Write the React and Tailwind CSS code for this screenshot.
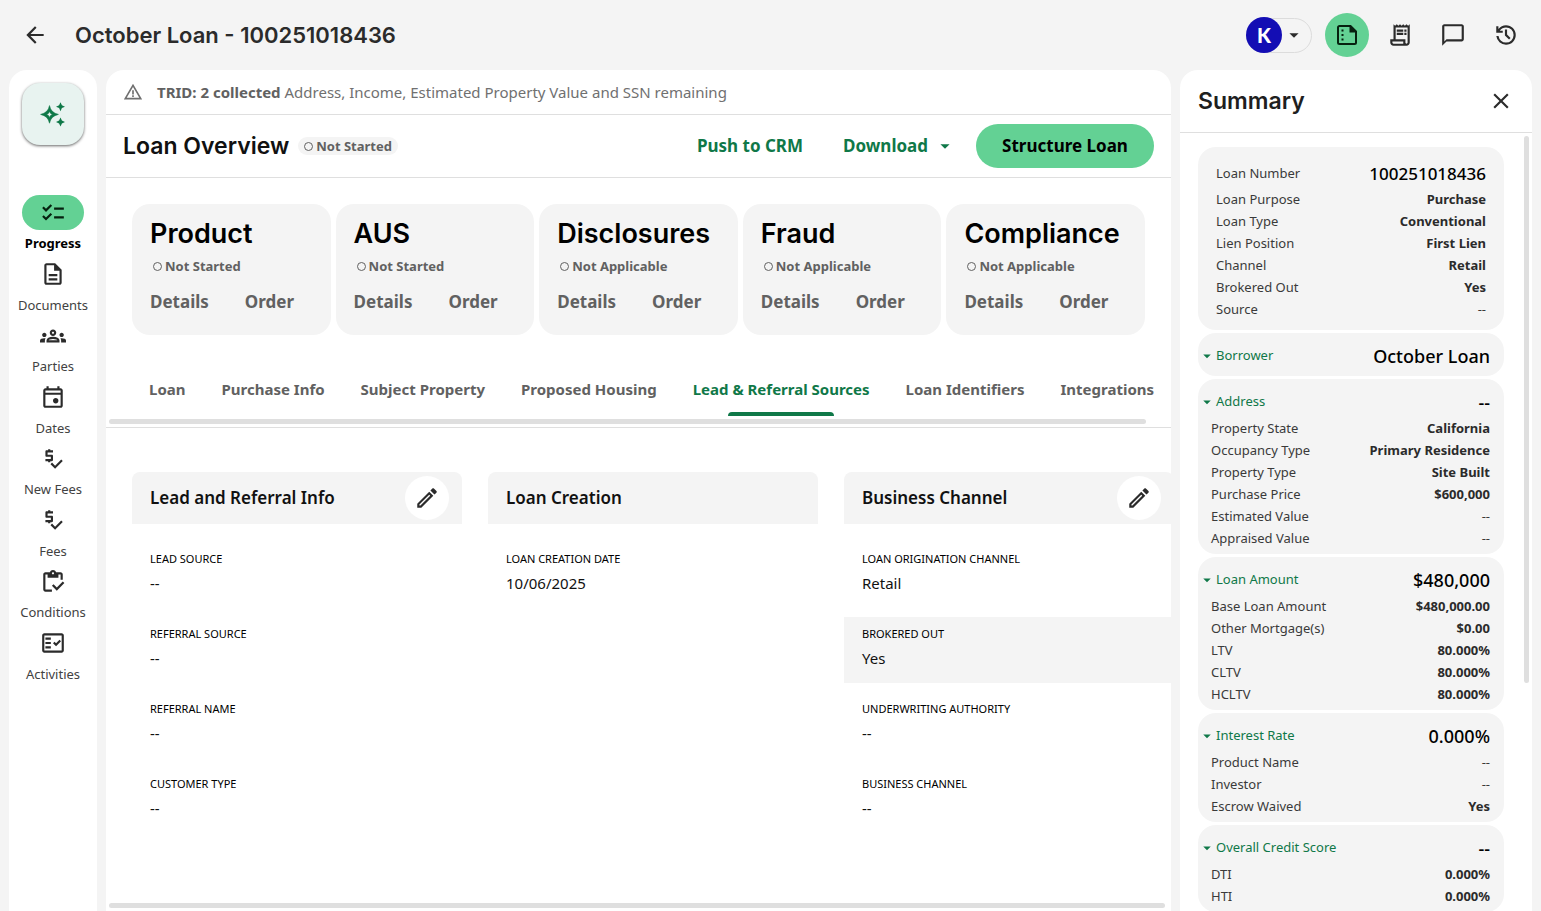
import {
  MdArrowBack,
  MdArrowDropDown,
  MdChecklist,
  MdClose,
  MdOutlineChatBubbleOutline,
  MdOutlineDescription,
  MdOutlineEdit,
  MdOutlineFactCheck,
  MdOutlineGroups,
  MdOutlineInventory,
  MdOutlineReceiptLong,
  MdPriceCheck,
  MdWarningAmber,
} from 'react-icons/md'

const NAV_ITEMS = [
  { label: 'Progress', icon: MdChecklist },
  { label: 'Documents', icon: MdOutlineDescription },
  { label: 'Parties', icon: MdOutlineGroups },
  { label: 'Dates', icon: CalendarIcon },
  { label: 'New Fees', icon: MdPriceCheck },
  { label: 'Fees', icon: MdPriceCheck },
  { label: 'Conditions', icon: MdOutlineInventory },
  { label: 'Activities', icon: MdOutlineFactCheck },
]

const STATUS_CARDS = [
  { title: 'Product', status: 'Not Started' },
  { title: 'AUS', status: 'Not Started' },
  { title: 'Disclosures', status: 'Not Applicable' },
  { title: 'Fraud', status: 'Not Applicable' },
  { title: 'Compliance', status: 'Not Applicable' },
]

const TABS = [
  'Loan',
  'Purchase Info',
  'Subject Property',
  'Proposed Housing',
  'Lead & Referral Sources',
  'Loan Identifiers',
  'Integrations',
]

const SECTIONS = [
  {
    title: 'Lead and Referral Info',
    editable: true,
    fields: [
      ['Lead Source', '--'],
      ['Referral Source', '--'],
      ['Referral Name', '--'],
      ['Customer Type', '--'],
    ],
  },
  {
    title: 'Loan Creation',
    editable: false,
    fields: [['Loan Creation Date', '10/06/2025']],
  },
  {
    title: 'Business Channel',
    editable: true,
    fields: [
      ['Loan Origination Channel', 'Retail'],
      ['Brokered Out', 'Yes', true],
      ['Underwriting Authority', '--'],
      ['Business Channel', '--'],
    ],
  },
]

const LOAN_ROWS = [
  ['Loan Purpose', 'Purchase'],
  ['Loan Type', 'Conventional'],
  ['Lien Position', 'First Lien'],
  ['Channel', 'Retail'],
  ['Brokered Out', 'Yes'],
  ['Source', '--'],
]

const SUMMARY_GROUPS = [
  { title: 'Borrower', value: 'October Loan', rows: [] },
  {
    title: 'Address',
    value: '--',
    rows: [
      ['Property State', 'California'],
      ['Occupancy Type', 'Primary Residence'],
      ['Property Type', 'Site Built'],
      ['Purchase Price', '$600,000'],
      ['Estimated Value', '--'],
      ['Appraised Value', '--'],
    ],
  },
  {
    title: 'Loan Amount',
    value: '$480,000',
    rows: [
      ['Base Loan Amount', '$480,000.00'],
      ['Other Mortgage(s)', '$0.00'],
      ['LTV', '80.000%'],
      ['CLTV', '80.000%'],
      ['HCLTV', '80.000%'],
    ],
  },
  {
    title: 'Interest Rate',
    value: '0.000%',
    rows: [
      ['Product Name', '--'],
      ['Investor', '--'],
      ['Escrow Waived', 'Yes'],
    ],
  },
  {
    title: 'Overall Credit Score',
    value: '--',
    rows: [
      ['DTI', '0.000%'],
      ['HTI', '0.000%'],
    ],
  },
]

function SparkleIcon() {
  return (
    <svg width="26" height="26" viewBox="0 0 26 26" fill="currentColor">
      <path
        fillRule="evenodd"
        d="M9.500 4.600 Q10.800 11.800 18.400 13.400 Q10.800 15 9.500 22.200 Q8.200 15 0.600 13.400 Q8.200 11.800 9.500 4.600 Z M9.500 10.400 Q8.800 12.700 6.600 13.400 Q8.800 14.100 9.500 16.400 Q10.200 14.100 12.400 13.400 Q10.200 12.700 9.500 10.400 Z"
        stroke="currentColor"
        strokeWidth="0.6"
      />
      <path d="M20.500 1.200 L21.900 4.300 L25 5.700 L21.900 7.100 L20.500 10.200 L19.100 7.100 L16 5.700 L19.100 4.300 Z" />
      <path d="M20.500 16.500 L21.900 19.600 L25 21 L21.900 22.400 L20.500 25.500 L19.100 22.400 L16 21 L19.100 19.600 Z" />
    </svg>
  )
}

function SummaryIcon() {
  return (
    <svg width="24" height="24" viewBox="0 0 24 24" fill="currentColor">
      <path
        d="M4.500 3H15.500L21 8.500V19.500a1.500 1.500 0 0 1-1.500 1.500H4.500A1.500 1.500 0 0 1 3 19.500V4.500A1.500 1.500 0 0 1 4.500 3z"
        fill="none"
        stroke="currentColor"
        strokeWidth="2"
      />
      <path d="M14.500 2.500L21.500 9.500H14.500z" />
      <path d="M6.500 6.500h2v2h-2zM6.500 11h2v2h-2zM6.500 15.500h2v2h-2z" />
    </svg>
  )
}

function HistoryIcon() {
  return (
    <svg width="26" height="26" viewBox="0 0 24 24" fill="currentColor">
      <path d="M12 21q-3.450 0-6.012-2.288T3.050 13H5.100q.350 2.600 2.313 4.300T12 19q2.925 0 4.963-2.037T19 12t-2.037-4.962T12 5q-1.725 0-3.225.8T6.250 8H9v2H3V4h2v2.350q1.275-1.600 3.113-2.475T12 3q1.875 0 3.513.713t2.850 1.924t1.925 2.850T21 12t-.712 3.513t-1.925 2.850t-2.850 1.925T12 21m2.800-4.800L11 12.400V7h2v4.600l3.200 3.200z" />
    </svg>
  )
}

function CalendarIcon({ size }) {
  return (
    <svg width={size} height={size} viewBox="0 0 24 24" fill="currentColor">
      <path d="M14.500 18q-1.050 0-1.775-.725T12 15.500t.725-1.775T14.500 13t1.775.725T17 15.500t-.725 1.775T14.500 18M5 22q-.825 0-1.412-.587T3 20V6q0-.825.588-1.412T5 4h1V2h2v2h8V2h2v2h1q.825 0 1.413.588T21 6v14q0 .825-.587 1.413T19 22zm0-2h14V10H5zM5 8h14V6H5z" />
    </svg>
  )
}

function IconButton({ label, active = false, children }) {
  return (
    <button
      aria-label={label}
      className={`flex size-11 items-center justify-center rounded-full ${active ? 'bg-[#63d194] text-[#06210f]' : 'text-[#2b2b2b]'}`}
    >
      {children}
    </button>
  )
}

function Status({ text }) {
  return (
    <span className="flex items-center gap-[3px] text-[13px] leading-4 font-bold text-[#616161]">
      <span className="size-[9px] rounded-full border border-[#616161]" />
      {text}
    </span>
  )
}

function TopBar() {
  return (
    <header className="flex h-[70px] shrink-0 items-center justify-between px-[13px]">
      <div className="flex items-center gap-[18px]">
        <IconButton label="Back">
          <MdArrowBack size={26} />
        </IconButton>
        <h1 className="font-[Inter] text-[22px] font-semibold text-[#2b2b2b]">October Loan - 100251018436</h1>
      </div>
      <div className="flex items-center gap-[9px]">
        <button
          aria-label="Account menu"
          className="mr-1 flex h-[35px] w-[66px] items-center gap-px rounded-full border border-[#dcdcdc]"
        >
          <span className="-ml-px flex size-9 shrink-0 items-center justify-center rounded-full bg-[#130db4] font-['Lato'] text-xl font-black text-white">
            K
          </span>
          <MdArrowDropDown size={22} className="text-[#2b2b2b]" />
        </button>
        <IconButton label="Summary" active>
          <SummaryIcon />
        </IconButton>
        <IconButton label="Receipts">
          <MdOutlineReceiptLong size={26} />
        </IconButton>
        <IconButton label="Comments">
          <MdOutlineChatBubbleOutline size={26} />
        </IconButton>
        <IconButton label="History">
          <HistoryIcon />
        </IconButton>
      </div>
    </header>
  )
}

function NavRail() {
  return (
    <nav className="flex w-[88px] shrink-0 flex-col items-center rounded-t-[18px] bg-white pt-[13px]">
      <button
        aria-label="Assistant"
        className="flex size-[62px] shrink-0 items-center justify-center rounded-[18px] bg-[#e8f3f0] text-[#0f7848] shadow-[0_1px_3px_rgba(0,0,0,0.6)]"
      >
        <SparkleIcon />
      </button>
      <ul className="mt-[50px] flex h-[489px] flex-col justify-between">
        {NAV_ITEMS.map(({ label, icon: Icon }, i) => (
          <li key={label}>
            <a href="#" className="flex flex-col items-center gap-[3px]">
              <span
                className={`flex h-[35px] w-[62px] items-center justify-center rounded-full ${i === 0 ? 'bg-[#63d194] text-[#06210f]' : 'text-[#2b2b2b]'}`}
              >
                <Icon size={26} />
              </span>
              <span className={`text-[13px] leading-5 ${i === 0 ? 'font-bold text-black' : 'text-[#424242]'}`}>{label}</span>
            </a>
          </li>
        ))}
      </ul>
    </nav>
  )
}

function StatusCard({ title, status }) {
  return (
    <div className="h-[131px] rounded-[18px] bg-[#f4f4f4] pt-[14px] pl-[18px]">
      <h3 className="font-[Inter] text-[27px] leading-8 font-semibold text-black">{title}</h3>
      <div className="mt-2 ml-[3px]">
        <Status text={status} />
      </div>
      <div className="mt-4 flex gap-9 text-[17px] leading-6 font-bold text-[#616161]">
        <button>Details</button>
        <button>Order</button>
      </div>
    </div>
  )
}

function Section({ title, editable, fields }) {
  return (
    <section className="w-[330px] shrink-0">
      <div className="flex h-[52px] items-center justify-between rounded-t-lg bg-[#f4f4f4] pr-[13px] pl-[18px]">
        <h3 className="text-[17px] font-semibold text-[#111111]">{title}</h3>
        {editable && (
          <button
            aria-label={`Edit ${title}`}
            className="flex size-11 items-center justify-center rounded-full bg-white text-[#2b2b2b]"
          >
            <MdOutlineEdit size={26} />
          </button>
        )}
      </div>
      <dl className="mt-[18px] flex flex-col gap-[9px]">
        {fields.map(([label, value, highlighted]) => (
          <div key={label} className={`h-[66px] pt-[9px] pl-[18px] ${highlighted ? 'bg-[#f4f4f4]' : ''}`}>
            <dt className="text-[11px] leading-4 text-black uppercase">{label}</dt>
            <dd className="mt-[6px] text-[15px] leading-5 text-[#111111]">{value}</dd>
          </div>
        ))}
      </dl>
    </section>
  )
}

function LoanOverview() {
  return (
    <main className="flex min-w-0 flex-1 flex-col overflow-hidden rounded-t-[18px] bg-white">
      <div className="flex h-[45px] shrink-0 items-center gap-[14px] border-b border-[#dfdfdf] pl-[17px] text-[15px] text-[#707070]">
        <MdWarningAmber size={20} />
        <p>
          <b className="text-[#616161]">TRID: 2 collected</b> Address, Income, Estimated Property Value and SSN remaining
        </p>
      </div>

      <div className="flex h-[63px] shrink-0 items-center justify-between border-b border-[#dfdfdf] px-[17px]">
        <div className="flex items-center gap-[9px]">
          <h2 className="font-[Inter] text-[23px] font-semibold text-[#111111]">Loan Overview</h2>
          <span className="rounded-full bg-[#f4f4f4] px-[6px] py-px">
            <Status text="Not Started" />
          </span>
        </div>
        <div className="flex items-center text-[17px] font-bold text-[#0f7848]">
          <button>Push to CRM</button>
          <button className="ml-10 flex items-center gap-[6px]">
            Download
            <MdArrowDropDown size={22} />
          </button>
          <button className="ml-5 h-11 w-[178px] rounded-full bg-[#63d194] text-black">Structure Loan</button>
        </div>
      </div>

      <div className="grid shrink-0 grid-cols-5 gap-[5px] px-[26px] pt-[26px]">
        {STATUS_CARDS.map((card) => (
          <StatusCard key={card.title} {...card} />
        ))}
      </div>

      <div className="mt-7 shrink-0 border-b border-[#dfdfdf]">
        <div role="tablist" className="flex gap-9 overflow-hidden pl-[43px] whitespace-nowrap">
          {TABS.map((tab) => {
            const selected = tab === 'Lead & Referral Sources'
            return (
              <button
                key={tab}
                role="tab"
                aria-selected={selected}
                className={`flex h-[53px] flex-col items-center justify-between pt-[14px] text-[15px] leading-6 font-bold ${selected ? 'text-[#0f7848]' : 'text-[#616161]'}`}
              >
                {tab}
                {selected && <span className="h-1 w-3/5 rounded-t bg-[#0f7848]" />}
              </button>
            )
          })}
        </div>
        <div className="mt-[3px] mr-[25px] mb-[3px] ml-[3px] h-[5px] rounded-full bg-[#dfdfdf]" />
      </div>

      <div className="flex min-h-0 flex-1 gap-[26px] overflow-hidden pt-11 pl-[26px]">
        {SECTIONS.map((section) => (
          <Section key={section.title} {...section} />
        ))}
      </div>
      <div className="mr-[6px] mb-[3px] ml-[3px] h-[5px] shrink-0 rounded-full bg-[#dfdfdf]" />
    </main>
  )
}

function SummaryRow({ label, value }) {
  return (
    <div className="flex h-[22px] items-center justify-between text-[13px] text-[#3a3a3a]">
      <dt>{label}</dt>
      <dd className={value === '--' ? '' : 'font-bold text-[#2b2b2b]'}>{value}</dd>
    </div>
  )
}

function SummaryPanel() {
  return (
    <aside className="flex w-[352px] shrink-0 flex-col overflow-hidden rounded-t-[18px] bg-white">
      <div className="flex h-[63px] shrink-0 items-center justify-between border-b border-[#dfdfdf] pr-[9px] pl-[18px]">
        <h2 className="font-[Inter] text-[23px] font-semibold text-[#1f1f1f]">Summary</h2>
        <IconButton label="Close summary">
          <MdClose size={26} />
        </IconButton>
      </div>
      <div className="flex min-h-0 flex-1 overflow-hidden">
        <div className="flex min-w-0 flex-1 flex-col gap-[3px] pt-[14px] pl-[18px]">
          <dl className="shrink-0 rounded-[18px] bg-[#f4f4f4] px-[18px] pt-3 pb-[9px]">
            <div className="flex h-[30px] items-center justify-between">
              <dt className="text-[13px] text-[#3a3a3a]">Loan Number</dt>
              <dd className="text-[17px] font-medium text-black">100251018436</dd>
            </div>
            {LOAN_ROWS.map(([label, value]) => (
              <SummaryRow key={label} label={label} value={value} />
            ))}
          </dl>
          {SUMMARY_GROUPS.map(({ title, value, rows }) => (
            <div key={title} className="shrink-0 rounded-[18px] bg-[#f4f4f4] pt-[7px] pr-[14px] pb-1">
              <button className="flex h-8 w-full items-center justify-between">
                <span className="flex items-center text-[13px] text-[#0f7848]">
                  <MdArrowDropDown size={18} />
                  {title}
                </span>
                <span className="text-lg font-medium text-black">{value}</span>
              </button>
              <dl className="pl-[13px]">
                {rows.map(([label, rowValue]) => (
                  <SummaryRow key={label} label={label} value={rowValue} />
                ))}
              </dl>
            </div>
          ))}
        </div>
        <div className="mt-[3px] mr-[3px] ml-5 h-[547px] w-[5px] shrink-0 rounded-full bg-[#dfdfdf]" />
      </div>
    </aside>
  )
}

export default function App() {
  return (
    <div className="flex h-screen flex-col overflow-hidden bg-[#f4f4f4] font-['Noto_Sans',sans-serif]">
      <TopBar />
      <div className="flex min-h-0 flex-1 gap-[9px] px-[9px]">
        <NavRail />
        <LoanOverview />
        <SummaryPanel />
      </div>
    </div>
  )
}
